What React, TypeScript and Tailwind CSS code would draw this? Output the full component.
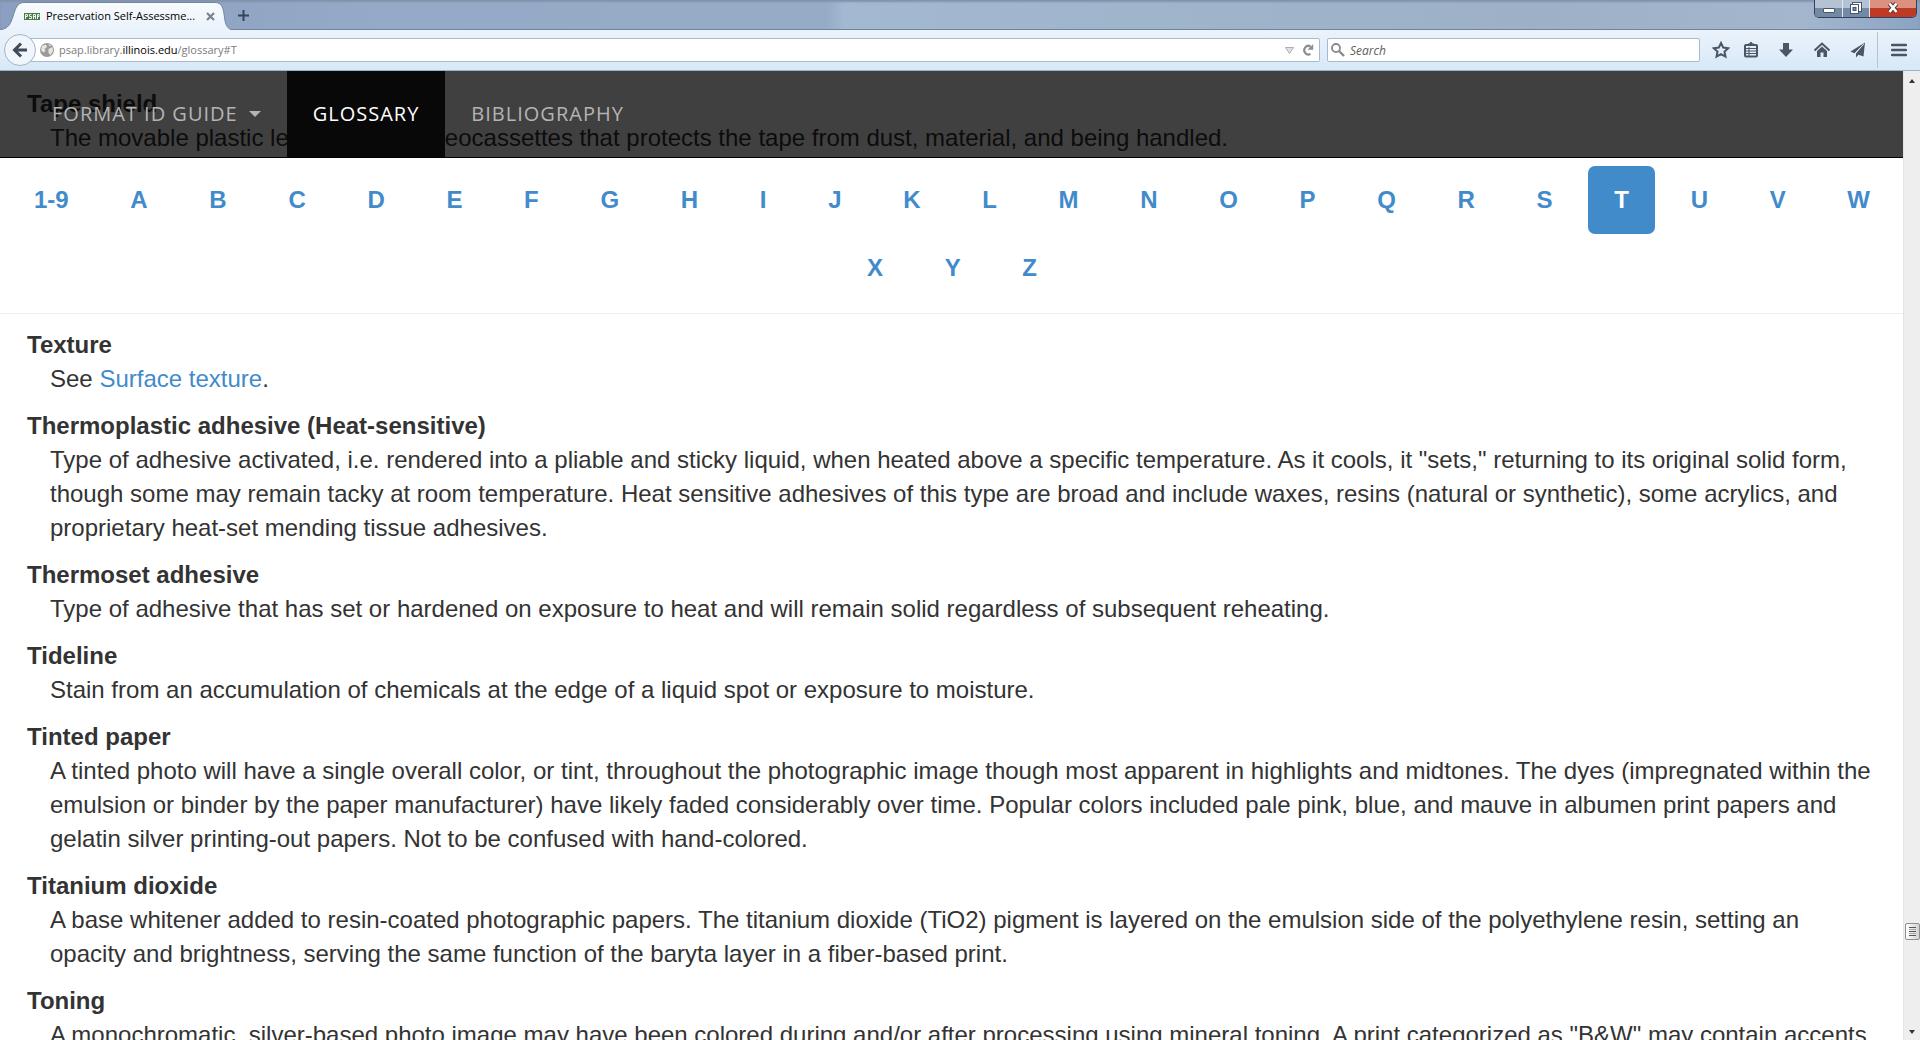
import React from "react";

const letters = ["1-9", ..."ABCDEFGHIJKLMNOPQRSTUVWXYZ".split("")];

const entries: { term: string; body: React.ReactNode }[] = [
  {
    term: "Texture",
    body: (
      <>
        See <a href="#surface-texture" className="text-[#428bca]">Surface texture</a>.
      </>
    ),
  },
  {
    term: "Thermoplastic adhesive (Heat-sensitive)",
    body:
      'Type of adhesive activated, i.e. rendered into a pliable and sticky liquid, when heated above a specific temperature. As it cools, it "sets," returning to its original solid form, though some may remain tacky at room temperature. Heat sensitive adhesives of this type are broad and include waxes, resins (natural or synthetic), some acrylics, and proprietary heat-set mending tissue adhesives.',
  },
  {
    term: "Thermoset adhesive",
    body: "Type of adhesive that has set or hardened on exposure to heat and will remain solid regardless of subsequent reheating.",
  },
  {
    term: "Tideline",
    body: "Stain from an accumulation of chemicals at the edge of a liquid spot or exposure to moisture.",
  },
  {
    term: "Tinted paper",
    body:
      "A tinted photo will have a single overall color, or tint, throughout the photographic image though most apparent in highlights and midtones. The dyes (impregnated within the emulsion or binder by the paper manufacturer) have likely faded considerably over time. Popular colors included pale pink, blue, and mauve in albumen print papers and gelatin silver printing-out papers. Not to be confused with hand-colored.",
  },
  {
    term: "Titanium dioxide",
    body:
      "A base whitener added to resin-coated photographic papers. The titanium dioxide (TiO2) pigment is layered on the emulsion side of the polyethylene resin, setting an opacity and brightness, serving the same function of the baryta layer in a fiber-based print.",
  },
  {
    term: "Toning",
    body:
      'A monochromatic, silver-based photo image may have been colored during and/or after processing using mineral toning. A print categorized as "B&W" may contain accents',
  },
];

function Entry({ term, children }: { term: string; children: React.ReactNode }) {
  return (
    <div className="mb-[13px] pr-6 pl-[27px]">
      <dt className="font-bold">{term}</dt>
      <dd className="pl-[23px]">{children}</dd>
    </div>
  );
}

function TitleBar() {
  return (
    <div className="flex h-[30px] items-end bg-[linear-gradient(90deg,#8b9fc0_0%,#95aac6_20%,#95abc6_43%,#a3b8d1_44%,#9fb5cc_60%,#9db0c8_80%,#a3b6cd_94%,#8ba3c3_100%)] shadow-[inset_0_2px_2px_#8193ab,inset_0_-1px_0_#6f839c]">
      <div className="relative flex h-7 w-[231px] items-center pl-6">
        <svg className="absolute inset-0 h-full w-full" viewBox="0 0 231 28" preserveAspectRatio="none" aria-hidden="true">
          <defs>
            <linearGradient id="tab" x1="0" y1="0" x2="0" y2="1">
              <stop offset="0" stopColor="#f8fbfe" />
              <stop offset="1" stopColor="#eaf2fb" />
            </linearGradient>
          </defs>
          <path d="M0 28.5V27.5C17 27.5 10 0.5 24 0.5H215C229 0.5 220 24 231 27.5V28.5Z" fill="url(#tab)" />
          <path d="M0 27.5C17 27.5 10 0.5 24 0.5H215C229 0.5 220 24 231 27.5" fill="none" stroke="#7286a0" />
        </svg>
        <svg className="relative h-[7px] w-4" viewBox="0 0 16 7" aria-hidden="true">
          <rect width="16" height="7" fill="#4c7a4c" />
          <path d="M1.5 6V1.5H3.5V3.5H1.5M7.500 1.500H5.500V3.500H7.500V5.500H5M9.500 6V1.500H11.500V6M9.500 3.500H11.500M13.500 6V1.500H15V3.500H13.500" fill="none" stroke="#eef5ec" />
        </svg>
        <span className="relative ml-[6px] w-[155px] whitespace-nowrap text-[11px] text-black">Preservation Self-Assessme...</span>
        <button aria-label="Close tab" className="relative ml-[3px] grid size-3 place-items-center">
          <svg className="size-[9px]" viewBox="0 0 9 9" aria-hidden="true">
            <path d="M1 1L8 8M8 1L1 8" stroke="#7c838c" strokeWidth="2.2" />
          </svg>
        </button>
      </div>
      <button aria-label="New tab" className="mb-[9px] ml-[7px]">
        <svg className="size-[11px]" viewBox="0 0 11 11" aria-hidden="true">
          <path d="M5.5 0V11M0 5.5H11" stroke="#36455a" strokeWidth="2" />
        </svg>
      </button>
      <div className="mr-[3px] ml-auto flex h-[18px] self-start overflow-hidden rounded-b-[5px] border border-t-0 border-[#31435c]">
        <button aria-label="Minimize" className="grid w-[28px] place-items-center border-r border-[#e0e8f1] bg-linear-to-b from-[#b4c2d3] from-50% to-[#7389a4] to-50%">
          <svg className="h-[17px] w-[27px]" viewBox="0 0 27 17" aria-hidden="true">
            <rect x="8.500" y="8.5" width="11" height="4" rx="0.5" fill="#fff" stroke="#46566b" />
          </svg>
        </button>
        <button aria-label="Restore" className="grid w-[27px] place-items-center border-r border-[#e0e8f1] bg-linear-to-b from-[#b4c2d3] from-50% to-[#7389a4] to-50%">
          <svg className="h-[17px] w-[27px]" viewBox="0 0 27 17" aria-hidden="true">
            <rect x="9.5" y="2.5" width="9" height="9" fill="#fff" stroke="#46566b" />
            <rect x="7.5" y="4.5" width="8" height="9" fill="#fff" stroke="#46566b" />
            <rect x="10" y="7.5" width="3" height="3" fill="#7389a4" stroke="#46566b" />
          </svg>
        </button>
        <button aria-label="Close" className="grid w-[46px] place-items-center bg-linear-to-b from-[#dc9080] from-50% to-[#bf3a25] to-50%">
          <svg className="h-[17px] w-[20px]" viewBox="0 0 20 17" aria-hidden="true">
            <path d="M6.500 3.500L13.500 12M13.500 3.500L6.500 12" stroke="#5c3636" strokeWidth="4.4" />
            <path d="M6.500 3.500L13.500 12M13.500 3.500L6.500 12" stroke="#fff" strokeWidth="2.6" />
          </svg>
        </button>
      </div>
    </div>
  );
}

function Toolbar() {
  return (
    <div className="flex h-[41px] items-center border-b border-[#9fb1c4] bg-linear-to-b from-[#ebf3fb] to-[#d8e8f8] pr-[13px] pl-1">
      <button aria-label="Back" className="relative z-10 grid size-8 shrink-0 place-items-center rounded-full border border-[#a4b4c6] bg-[#f0f6fc]">
        <svg className="size-4" viewBox="0 0 16 16" aria-hidden="true">
          <path d="M9 1.5L2.5 8L9 14.5M3 8H15" fill="none" stroke="#3f4b58" strokeWidth="3" />
        </svg>
      </button>
      <div className="-ml-2 flex h-6 flex-1 items-center rounded-r-[2px] border border-l-0 border-[#a9bacd] bg-white pr-[5px] pl-3">
        <svg className="size-[14px] shrink-0" viewBox="0 0 14 14" aria-hidden="true">
          <circle cx="7" cy="7" r="7" fill="#9a9a9a" />
          <path d="M2 3L6 1.5L7 4L4.5 6L5.5 8L3.5 9.5L1 7ZM8.5 6L12.5 4L13 8L10.5 12L8.5 10ZM8 1.2L11 2L10 3.5Z" fill="#e6e6e6" />
        </svg>
        <span className="ml-[5px] flex-1 pt-px text-[11px] text-[#7b7b7b]">
          psap.library.<span className="text-black">illinois.edu</span>/glossary#T
        </span>
        <svg className="mr-2 h-[7px] w-[9px]" viewBox="0 0 9 7" aria-hidden="true">
          <path d="M0.5 0.5H8.5L4.5 6.5Z" fill="#dde2e8" stroke="#a7afb8" />
        </svg>
        <button aria-label="Reload">
          <svg className="size-3" viewBox="0 0 12 12" aria-hidden="true">
            <path d="M8.5 2.6A4 4.300 0 1 0 8.500 9.800" fill="none" stroke="#868e98" strokeWidth="2.200" />
            <path d="M11.200 0V5.800H5.600Z" fill="#868e98" />
          </svg>
        </button>
      </div>
      <label className="ml-[7px] flex h-6 w-[373px] items-center rounded-[2px] border border-[#a9bacd] bg-white pl-[3px]">
        <svg className="size-[14px]" viewBox="0 0 14 14" aria-hidden="true">
          <circle cx="5" cy="5" r="4" fill="none" stroke="#8b8b8b" strokeWidth="1.8" />
          <path d="M8 8L13 13" stroke="#8b8b8b" strokeWidth="2.4" />
        </svg>
        <input aria-label="Search" placeholder="Search" className="ml-[5px] min-w-0 flex-1 pt-px text-[12px] italic outline-none placeholder:text-[#5e5e5e]" />
      </label>
      <div className="ml-3 flex items-center text-[#4a5663]">
        <button aria-label="Bookmark">
          <svg className="size-[18px]" viewBox="0 0 18 18" aria-hidden="true">
            <path d="M9 2L11.2 6.6L16.2 7.2L12.5 10.6L13.5 15.7L9 13.2L4.5 15.7L5.5 10.6L1.8 7.2L6.8 6.6Z" fill="none" stroke="currentColor" strokeWidth="2" />
          </svg>
        </button>
        <button aria-label="Bookmarks list" className="ml-3">
          <svg className="size-[18px]" viewBox="0 0 18 18" aria-hidden="true">
            <path d="M6 4V3H7.5L9 1L10.5 3H12V4Z" fill="currentColor" stroke="currentColor" />
            <rect x="3" y="4" width="12" height="11.5" rx="1" fill="none" stroke="currentColor" strokeWidth="2" />
            <path d="M4 7.5H14M4 10H14M4 12.5H14M7 6V15" stroke="currentColor" />
          </svg>
        </button>
        <button aria-label="Downloads" className="ml-[17px]">
          <svg className="size-[18px]" viewBox="0 0 18 18" aria-hidden="true">
            <path d="M6 2H12V8.5H16L9 16L2 8.5H6Z" fill="currentColor" />
          </svg>
        </button>
        <button aria-label="Home" className="ml-[18px]">
          <svg className="size-[18px]" viewBox="0 0 18 18" aria-hidden="true">
            <path d="M1.5 9.5L9 2.5L16.5 9.5" fill="none" stroke="currentColor" strokeWidth="2" />
            <path d="M4 10L9 5.5L14 10V16H10.5V11.5H7.5V16H4Z" fill="currentColor" />
          </svg>
        </button>
        <button aria-label="Share" className="ml-[18px]">
          <svg className="size-[18px]" viewBox="0 0 18 18" aria-hidden="true">
            <path d="M16 1.5L1.5 10.5L5.5 12.2ZM16 1.5L7 12.5V16.5L9.5 13.8L14.5 15.5Z" fill="currentColor" />
            <path d="M15 3L6 12.3" stroke="#e2edf9" strokeWidth="0.8" />
          </svg>
        </button>
        <span className="ml-[10px] h-9 w-px bg-[#b3c3d3]" />
        <button aria-label="Menu" className="ml-[13px]">
          <svg className="h-[14px] w-4" viewBox="0 0 16 14" aria-hidden="true">
            <path d="M1 2H15M1 7H15M1 12H15" stroke="currentColor" strokeWidth="2.5" strokeLinecap="round" />
          </svg>
        </button>
      </div>
    </div>
  );
}

function SiteNav() {
  return (
    <nav className="absolute inset-0 flex border-b border-black bg-black/75 pl-[26px] font-['Open_Sans','Noto_Sans',sans-serif] text-[20px] tracking-[1px] text-[#b4b4b4]">
      <a href="#format-id-guide" className="flex items-center px-[26px]">
        FORMAT ID GUIDE
        <span className="ml-[11px] border-x-[6px] border-t-[6px] border-x-transparent border-t-[#b4b4b4]" />
      </a>
      <a href="#glossary" className="flex items-center bg-[#080808] px-[26px] text-white">GLOSSARY</a>
      <a href="#bibliography" className="flex items-center px-[26px]">BIBLIOGRAPHY</a>
    </nav>
  );
}

function Scrollbar() {
  return (
    <div className="flex w-[17px] shrink-0 flex-col items-center border-l border-[#e3e3e3] bg-[#eeeeee]">
      <span className="mt-2 border-x-[3px] border-b-[4px] border-x-transparent border-b-[#333]" />
      <div className="flex-1" />
      <div className="flex h-[17px] w-[15px] flex-col items-center justify-center gap-px rounded-[2px] border border-[#8f8f8f] bg-linear-to-r from-white to-[#d2d2d2]">
        <span className="h-px w-[7px] bg-[#555]" />
        <span className="h-px w-[7px] bg-[#aaa]" />
        <span className="h-px w-[7px] bg-[#555]" />
        <span className="h-px w-[7px] bg-[#aaa]" />
        <span className="h-px w-[7px] bg-[#555]" />
      </div>
      <span className="mt-[90px] mb-[6px] border-x-[3px] border-t-[4px] border-x-transparent border-t-[#333]" />
    </div>
  );
}

export default function App() {
  return (
    <div className="flex h-screen flex-col overflow-hidden bg-white font-['Open_Sans','Noto_Sans',sans-serif]">
      <header>
        <TitleBar />
        <Toolbar />
      </header>
      <div className="flex min-h-0 flex-1">
        <main className="min-w-0 flex-1 overflow-hidden font-['Liberation_Sans',Arial,sans-serif] text-[24px] leading-[34px] text-[#333]">
          <div className="relative h-[87px] pt-4">
            <dl>
              <Entry term="Tape shield">
                The movable plastic leaf on some videocassettes that protects the tape from dust, material, and being handled.
              </Entry>
            </dl>
            <SiteNav />
          </div>
          <ul className="border-b border-[#eee] pt-2 pb-[11px] text-center font-bold">
            {letters.map((l) => (
              <React.Fragment key={l}>
                <li className="mr-px ml-[2px] inline-block align-top">
                  <a
                    href={"#" + l}
                    className={
                      l === "T"
                        ? "block rounded-[7px] bg-[#428bca] px-[26px] py-[17px] text-white"
                        : "block rounded-[7px] px-[26px] py-[17px] text-[#428bca]"
                    }
                  >
                    {l}
                  </a>
                </li>{" "}
              </React.Fragment>
            ))}
          </ul>
          <dl className="pt-[14px]">
            {entries.map((e) => (
              <Entry key={e.term} term={e.term}>{e.body}</Entry>
            ))}
          </dl>
        </main>
        <Scrollbar />
      </div>
    </div>
  );
}
